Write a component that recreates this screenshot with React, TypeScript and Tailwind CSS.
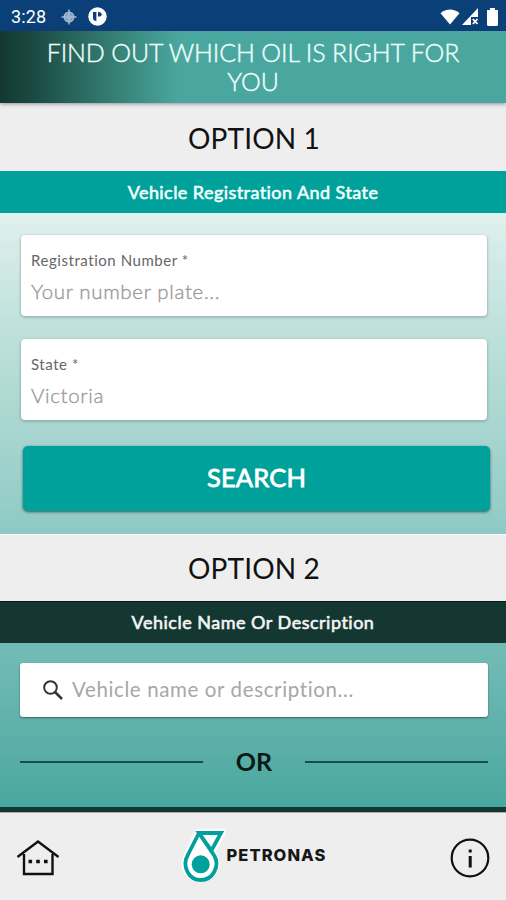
import React from 'react';

function StatusBar() {
  return (
    <div className="flex h-[31px] items-center justify-between bg-[#0b3f78] pr-2 pl-[11px] text-white">
      <div className="flex items-center pt-0.5">
        <span className="w-[50px] font-[Roboto] text-[18px] leading-5 tracking-[0.1px]">3:28</span>
        <svg className="h-[16px] w-[16px]" viewBox="0 0 16 16" fill="none" stroke="#a3b9d2">
          <circle cx="8" cy="8" r="4.8" strokeWidth="1.4" fill="#7f9bbb" />
          <circle cx="8" cy="8" r="2.3" />
          <path d="M8 0.500v15M0.500 8h15" strokeWidth="1.5" />
        </svg>
        <svg className="ml-[11px] h-[19px] w-[19px]" viewBox="0 0 19 19">
          <circle cx="9.5" cy="9.5" r="9.2" fill="#fff" />
          <path d="M5 5h3.400v9c-2 0-3.400-1-3.400-3z" fill="#0b3f78" />
          <path d="M10 5c4.200-.6 5 4 1.500 4.600H10z" fill="#0b3f78" />
        </svg>
      </div>
      <div className="flex items-center pt-0.5">
        <svg className="h-[16px] w-[20px]" viewBox="0 0 20 16">
          <path d="M0.5 4.2C6-.8 14-.8 19.5 4.2L10 15.5z" fill="#fff" />
        </svg>
        <svg className="ml-[2px] h-[17px] w-[17px]" viewBox="0 0 17 17">
          <path d="M0 17L16 0v9H9v8z" fill="#fff" />
          <path d="M10.8 11l4.7 5M15.5 11l-4.7 5" stroke="#fff" strokeWidth="1.8" />
        </svg>
        <svg className="ml-[8px] h-[18px] w-[11px]" viewBox="0 0 11 18">
          <path d="M3 0h5v2h3v14.500Q11 18 9.500 18h-8Q0 18 0 16.500V2h3z" fill="#fff" />
        </svg>
      </div>
    </div>
  );
}

function OptionTitle({ children }: { children: React.ReactNode }) {
  return <h2 className="pl-0.5 text-center text-[28px] tracking-[0.15px] text-[#111]">{children}</h2>;
}

function Field({ label, value }: { label: string; value: string }) {
  return (
    <div className="flex h-[81px] flex-col rounded-[4px] bg-white px-[10px] pt-[15px] shadow-[0_1px_2px_1px_rgba(90,100,110,0.3)]">
      <span className="text-[15px] leading-5 tracking-[0.55px] text-[#666]">{label}</span>
      <span className="mt-[9px] text-[20.500px] leading-6 font-light tracking-[0.65px] text-[#999] [-webkit-text-stroke:0.35px_#999]">{value}</span>
    </div>
  );
}

function Logo() {
  return (
    <svg className="h-[58px] w-[46px]" viewBox="181 827 46 58">
      <g fill="#fff" stroke="#fff" strokeWidth="8" strokeLinejoin="round">
        <path d="M198.500 832H221.500L212 849M198.500 832L188 854A15 15 0 1 0 213.500 855Z" />
      </g>
      <g fill="#fff" stroke="#00a19c" strokeWidth="3.800">
        <path d="M199 832L188 853.500C181.500 865 188.500 879 200.800 879S220 865 214.500 855Z" strokeLinejoin="round" />
        <path d="M199 832H221L211.500 849.500Z" />
      </g>
      <circle cx="200.700" cy="863.300" r="9" fill="#00a19c" />
    </svg>
  );
}

export default function App() {
  return (
    <div className="flex h-[900px] w-[506px] flex-col overflow-hidden bg-[#eee] font-[Lato,sans-serif]">
      <StatusBar />
      <header className="relative h-[72px] bg-[linear-gradient(90deg,#143732_0px,#1b4b44_35px,#28665c_75px,#378378_120px,#4aa7a0_180px,#4aa7a0_100%)] pt-[7px] text-center text-[25px] leading-[29px] tracking-[-0.13px] text-[#effffb] shadow-[0_1px_4px_rgba(50,50,80,0.5)]">
        <h1 className="font-light [-webkit-text-stroke:0.4px_#effffb]">
          FIND OUT WHICH OIL IS RIGHT FOR
          <br />
          YOU
        </h1>
      </header>
      <main className="flex h-[709px] flex-col bg-[linear-gradient(180deg,#e0f0ed_110px,#bfe1db_225px,#a5d4ce_340px,#8ecac4_430px,#73bcb6_542px,#5cafa8_640px,#48a8a0_704px)]">
        <section>
          <div className="h-[68px] bg-[#eee] leading-[70px]">
            <OptionTitle>OPTION 1</OptionTitle>
          </div>
          <h3 className="h-[42px] bg-[#00a19b] text-center text-[18px] leading-[42px] tracking-[0.44px] text-[#effffd] [-webkit-text-stroke:0.6px_#effffd]">Vehicle Registration And State</h3>
          <div className="flex h-[321px] flex-col gap-[23px] pt-[22px] pr-[19px] pl-[21px]">
            <Field label="Registration Number *" value="Your number plate..." />
            <Field label="State *" value="Victoria" />
            <button className="mt-[3px] -mr-[3px] ml-[2px] h-[65px] rounded-[5px] bg-[#00a19b] pb-[3px] text-[25.500px] tracking-[0.15px] text-white shadow-[0_1px_3px_rgba(0,0,0,0.6)] [-webkit-text-stroke:0.8px_#fff]">SEARCH</button>
          </div>
        </section>
        <section>
          <div className="h-[67px] border-t border-white bg-[#eee] leading-[66px]">
            <OptionTitle>OPTION 2</OptionTitle>
          </div>
          <h3 className="h-[42px] border-t border-[#031b18] bg-[#143732] text-center text-[18px] leading-[41px] tracking-[0.5px] text-[#f2f5f4] [-webkit-text-stroke:0.6px_#f2f5f4]">Vehicle Name Or Description</h3>
          <div className="h-[164px] pt-[20px] pr-[18px] pl-[20px]">
            <div className="flex h-[54px] items-center rounded-[3px] bg-white pl-[21px] shadow-[0_1px_2px_rgba(0,0,0,0.45)]">
              <svg className="h-[24px] w-[24px]" viewBox="0 0 24 24" fill="none" stroke="#333" strokeWidth="2">
                <circle cx="9.500" cy="9.500" r="6.300" />
                <path d="M14 14l7 7" strokeWidth="2.500" />
              </svg>
              <span className="ml-[7px] pb-[2px] text-[20.500px] tracking-[0.62px] text-[#a7a7a7]">Vehicle name or description...</span>
            </div>
            <div className="mt-[30px] flex h-[30px] items-center">
              <span className="h-[2px] flex-1 bg-[#174e4b]" />
              <span className="w-[102px] pb-[2px] text-center text-[25px] leading-[28px] font-bold text-[#0b1816]">OR</span>
              <span className="h-[2px] flex-1 bg-[#174e4b]" />
            </div>
          </div>
        </section>
        <div className="h-[5px] bg-[#143732]" />
      </main>
      <footer className="flex h-[88px] items-center justify-between border-t border-[#aaa] bg-[#eee] pr-[15px] pl-[16px]">
        <svg className="h-[38px] w-[44px]" viewBox="16 838 44 38" fill="none" stroke="#111" strokeWidth="2.400">
          <path d="M17.500 857L38 841.500L58.500 857" />
          <path d="M24 854V874H52.500V854" />
          <path d="M28.500 861.500h3.600M36.200 861.500h3.600M44 861.500h3.600" strokeWidth="3.600" />
        </svg>
        <div className="flex w-[148px] items-center">
          <Logo />
          <span className="pb-1 font-[Inter] text-[16.500px] leading-5 font-extrabold tracking-[1.05px] text-[#171717]">PETRONAS</span>
        </div>
        <svg className="mt-[2px] h-[42px] w-[42px]" viewBox="0 0 42 42" fill="none" stroke="#111">
          <circle cx="21" cy="21" r="18.300" strokeWidth="2.200" />
          <path d="M21.200 19v11.500M21.200 12.500v3" strokeWidth="3" />
        </svg>
      </footer>
    </div>
  );
}
